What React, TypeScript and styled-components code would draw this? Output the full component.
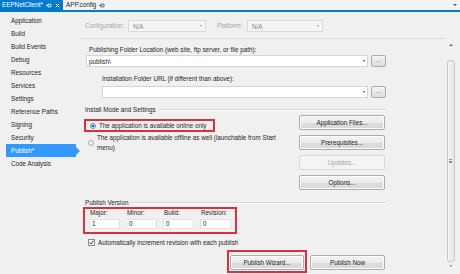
import React from "react";
import styled, { createGlobalStyle } from "styled-components";

const GlobalStyle = createGlobalStyle`
  html, body { margin: 0; padding: 0; background: #f0f0f0; }
  body { font-family: "Liberation Sans", Arial, sans-serif; }
  * { box-sizing: border-box; }
`;

const FONT = `"Liberation Sans", Arial, sans-serif`;
const RED = "#d8303e";
const BLUE = "#007acc";

const Window = styled.div`
  width: 460px;
  height: 274px;
  overflow: hidden;
  background: #f0f0f0;
  font-family: ${FONT};
  font-size: 6.3px;
  color: #1e1e1e;
  display: flex;
  flex-direction: column;
`;

const TabStrip = styled.div`
  height: 10px;
  display: flex;
  align-items: stretch;
  background: #f3f3f5;
`;

const DocTab = styled.div<{ $active?: boolean }>`
  display: flex;
  align-items: center;
  gap: 3px;
  padding: 0 3px 0 2px;
  width: ${(p) => (p.$active ? "63px" : "auto")};
  background: ${(p) => (p.$active ? BLUE : "transparent")};
  color: ${(p) => (p.$active ? "#ffffff" : "#1e1e1e")};
  margin-left: ${(p) => (p.$active ? "0" : "1px")};
`;

const TabLabel = styled.span`
  flex: 1;
  white-space: nowrap;
  line-height: 10px;
`;

const Glyph = styled.svg`
  display: block;
  flex: none;
`;

const TabSpacer = styled.div`
  flex: 1;
`;

const OverflowArrow = styled.div`
  width: 0;
  height: 0;
  align-self: center;
  margin-right: 3px;
  border-left: 2px solid transparent;
  border-right: 2px solid transparent;
  border-top: 2px solid #555;
`;

const AccentLine = styled.div`
  height: 2px;
  background: ${BLUE};
`;

const Body = styled.div`
  flex: 1;
  display: flex;
  min-height: 0;
`;

const Sidebar = styled.nav`
  width: 80px;
  flex: none;
  padding-top: 2px;
  display: flex;
  flex-direction: column;
`;

const NavItem = styled.div<{ $selected?: boolean }>`
  position: relative;
  height: 13px;
  line-height: 13px;
  padding-left: ${(p) => (p.$selected ? "5px" : "11px")};
  margin-left: ${(p) => (p.$selected ? "6px" : "0")};
  width: ${(p) => (p.$selected ? "70px" : "auto")};
  background: ${(p) => (p.$selected ? "#3399ff" : "transparent")};
  color: ${(p) => (p.$selected ? "#ffffff" : "#1e1e1e")};
  white-space: nowrap;
  &::after {
    content: "";
    display: ${(p) => (p.$selected ? "block" : "none")};
    position: absolute;
    right: -4px;
    top: 2.5px;
    border-top: 4px solid transparent;
    border-bottom: 4px solid transparent;
    border-left: 4px solid #3399ff;
  }
`;

const Main = styled.div`
  flex: 1;
  display: flex;
  flex-direction: column;
  min-width: 0;
`;

const ConfigBar = styled.div`
  height: 27px;
  padding: 8px 0 0 5px;
  display: flex;
  align-items: flex-start;
  border-bottom: 1px solid #dadada;
  margin-right: 14px;
`;

const FieldLabel = styled.span<{ $gap?: number }>`
  color: #a6a6a6;
  line-height: 12px;
  margin-left: ${(p) => p.$gap ?? 0}px;
  width: ${(p) => (p.$gap ? "30px" : "43px")};
  white-space: nowrap;
`;

const Select = styled.div<{ $width: number }>`
  width: ${(p) => p.$width}px;
  height: 12px;
  border: 1px solid #d9d9d9;
  background: #f5f5f5;
  color: #8a8a8a;
  display: flex;
  align-items: center;
  justify-content: space-between;
  padding: 0 3px 0 4px;
`;

const SmallArrow = styled.span<{ $color?: string }>`
  width: 0;
  height: 0;
  border-left: 1.5px solid transparent;
  border-right: 1.5px solid transparent;
  border-top: 2px solid ${(p) => p.$color ?? "#444"};
`;

const ScrollArea = styled.div`
  flex: 1;
  display: flex;
  justify-content: space-between;
  padding-right: 4px;
  min-height: 0;
`;

const Content = styled.div`
  width: 306px;
  padding-left: 5px;
  display: flex;
  flex-direction: column;
`;

const Scrollbar = styled.div`
  width: 11px;
  display: flex;
  flex-direction: column;
  align-items: center;
`;

const ScrollButton = styled.div<{ $height: number }>`
  height: ${(p) => p.$height}px;
  display: flex;
  align-items: center;
  justify-content: center;
`;

const UpArrow = styled.span`
  width: 0;
  height: 0;
  border-left: 2px solid transparent;
  border-right: 2px solid transparent;
  border-bottom: 2px solid #606060;
`;

const Thumb = styled.div`
  margin-top: 9px;
  width: 8px;
  height: 202px;
  border: 1px solid #c9c9c9;
  border-radius: 3px;
  background: linear-gradient(to right, #f4f4f4, #e4e4e4);
  display: flex;
  align-items: center;
  justify-content: center;
`;

const Grip = styled.div`
  width: 3px;
  height: 4px;
  border-top: 1px solid #8e8e8e;
  border-bottom: 1px solid #8e8e8e;
  position: relative;
  &::after {
    content: "";
    position: absolute;
    left: 0;
    right: 0;
    top: 0.5px;
    border-top: 1px solid #8e8e8e;
  }
`;

const Label = styled.div<{ $top: number; $indent?: number }>`
  margin-top: ${(p) => p.$top}px;
  padding-left: ${(p) => p.$indent ?? 4}px;
  line-height: 8px;
  height: 8px;
  white-space: nowrap;
`;

const ComboRow = styled.div<{ $top: number; $indent?: number }>`
  margin-top: ${(p) => p.$top}px;
  padding-left: ${(p) => p.$indent ?? 1}px;
  display: flex;
  gap: 3px;
  height: 12px;
`;

const Combo = styled.div`
  flex: 1;
  border: 1px solid #d5d5d5;
  background: #ffffff;
  display: flex;
  align-items: center;
  justify-content: space-between;
  padding: 0 2px 0 2px;
`;

const BrowseButton = styled.div`
  width: 15px;
  border: 1px solid #acacac;
  border-radius: 2px;
  background: linear-gradient(#f4f4f4, #dcdcdc);
  display: flex;
  align-items: center;
  justify-content: center;
  font-size: 5px;
  line-height: 5px;
  padding-bottom: 2px;
  color: #333;
`;

const GroupHeader = styled.div<{ $top: number }>`
  margin-top: ${(p) => p.$top}px;
  height: 9px;
  display: flex;
  align-items: center;
  gap: 3px;
  white-space: nowrap;
  &::after {
    content: "";
    flex: 1;
    height: 0;
    border-top: 1px solid #d5d5d5;
    border-bottom: 1px solid #ffffff;
  }
`;

const ModeSection = styled.div`
  margin-top: 1px;
  display: flex;
  justify-content: space-between;
`;

const RadioColumn = styled.div`
  display: flex;
  flex-direction: column;
  margin-left: -1px;
`;

const Highlight = styled.div<{ $top: number }>`
  margin-top: ${(p) => p.$top}px;
  border: 2px solid ${RED};
  align-self: flex-start;
`;

const OnlineBox = styled(Highlight)`
  width: 131px;
  height: 13px;
  padding-left: 2px;
  display: flex;
  align-items: center;
`;

const RadioRow = styled.div<{ $top?: number }>`
  margin-top: ${(p) => p.$top ?? 0}px;
  display: flex;
  align-items: center;
  gap: 3px;
  line-height: 10px;
`;

const Radio = styled.span<{ $checked?: boolean }>`
  flex: none;
  width: 6px;
  height: 6px;
  margin-left: 2px;
  border-radius: 50%;
  border: 1px solid ${(p) => (p.$checked ? "#6a8bb8" : "#a8a8a8")};
  background: ${(p) =>
    p.$checked
      ? "radial-gradient(circle, #1f5fa8 0 1.4px, #e9eef6 1.6px)"
      : "#f4f4f4"};
`;

const RadioText = styled.span<{ $wrap?: number }>`
  white-space: ${(p) => (p.$wrap ? "normal" : "nowrap")};
  width: ${(p) => (p.$wrap ? `${p.$wrap}px` : "auto")};
  line-height: 10px;
`;

const ButtonColumn = styled.div`
  width: 86px;
  margin-right: 1px;
  display: flex;
  flex-direction: column;
  gap: 5px;
`;

const Button = styled.div<{ $disabled?: boolean; $width?: number }>`
  height: 15px;
  width: ${(p) => (p.$width ? `${p.$width}px` : "auto")};
  border: 1px solid ${(p) => (p.$disabled ? "#d9d9d9" : "#acacac")};
  border-radius: 2px;
  background: ${(p) =>
    p.$disabled
      ? "#f4f4f4"
      : "linear-gradient(#f3f3f3 0%, #ebebeb 50%, #dddddd 51%, #d8d8d8 100%)"};
  color: ${(p) => (p.$disabled ? "#a6a6a6" : "#1e1e1e")};
  display: flex;
  align-items: center;
  justify-content: center;
  white-space: nowrap;
  box-shadow: inset 0 0 0 1px ${(p) => (p.$disabled ? "transparent" : "#fcfcfc")};
`;

const VersionBox = styled(Highlight)`
  margin-left: -2px;
  width: 154px;
  padding: 0 4px 3px 4px;
  display: flex;
  gap: 6px;
`;

const VersionField = styled.div`
  width: 31px;
  display: flex;
  flex-direction: column;
  gap: 2px;
`;

const VersionLabel = styled.span`
  line-height: 8px;
  padding-left: 1px;
`;

const VersionInput = styled.div`
  height: 10px;
  background: #ffffff;
  border: 1px solid #e2e2e2;
  line-height: 8px;
  padding-left: 2px;
`;

const CheckRow = styled.div`
  margin-top: 3px;
  height: 10px;
  display: flex;
  align-items: center;
  gap: 3px;
  padding-left: 3px;
`;

const CheckBox = styled.span`
  width: 7px;
  height: 7px;
  border: 1px solid #8f8f8f;
  background: #f4f4f4;
  display: flex;
  align-items: center;
  justify-content: center;
`;

const ActionRow = styled.div`
  margin-top: 3px;
  padding-right: 1px;
  display: flex;
  justify-content: flex-end;
  align-items: flex-start;
  gap: 3px;
`;

const WizardBox = styled(Highlight)`
  margin-top: 0;
  padding: 3px 1px 1px 1px;
`;

const NowButton = styled(Button)`
  margin-top: 5px;
`;

const PinIcon = ({ color }: { color: string }) => (
  <Glyph width="6" height="5" viewBox="0 0 6 5">
    <path d="M0 2.5h2M2 0.8v3.4M2 1.2h3v2.6h-3" stroke={color} strokeWidth="0.8" fill="none" />
  </Glyph>
);

const CloseIcon = ({ color }: { color: string }) => (
  <Glyph width="5" height="5" viewBox="0 0 5 5">
    <path d="M0.8 0.8l3.4 3.4M4.2 0.8l-3.4 3.4" stroke={color} strokeWidth="1" />
  </Glyph>
);

const navItems = [
  "Application",
  "Build",
  "Build Events",
  "Debug",
  "Resources",
  "Services",
  "Settings",
  "Reference Paths",
  "Signing",
  "Security",
  "Publish*",
  "Code Analysis",
];

const versionFields = [
  { label: "Major:", value: "1" },
  { label: "Minor:", value: "0" },
  { label: "Build:", value: "0" },
  { label: "Revision:", value: "0" },
];

export default function App() {
  return (
    <>
      <GlobalStyle />
      <Window>
        <TabStrip>
          <DocTab $active>
            <TabLabel>EEPNetClient*</TabLabel>
            <PinIcon color="#ffffff" />
            <CloseIcon color="#ffffff" />
          </DocTab>
          <DocTab>
            <TabLabel>APP.config</TabLabel>
            <PinIcon color="#444444" />
          </DocTab>
          <TabSpacer />
          <OverflowArrow />
        </TabStrip>
        <AccentLine />
        <Body>
          <Sidebar>
            {navItems.map((item) => (
              <NavItem key={item} $selected={item === "Publish*"}>
                {item}
              </NavItem>
            ))}
          </Sidebar>
          <Main>
            <ConfigBar>
              <FieldLabel>Configuration:</FieldLabel>
              <Select $width={78}>
                N/A
                <SmallArrow $color="#9a9a9a" />
              </Select>
              <FieldLabel $gap={11}>Platform:</FieldLabel>
              <Select $width={76}>
                N/A
                <SmallArrow $color="#9a9a9a" />
              </Select>
            </ConfigBar>
            <ScrollArea>
              <Content>
                <Label $top={7}>Publishing Folder Location (web site, ftp server, or file path):</Label>
                <ComboRow $top={1}>
                  <Combo>
                    publish\
                    <SmallArrow />
                  </Combo>
                  <BrowseButton>...</BrowseButton>
                </ComboRow>
                <Label $top={8} $indent={17}>
                  Installation Folder URL (if different than above):
                </Label>
                <ComboRow $top={3} $indent={17}>
                  <Combo>
                    <span />
                    <SmallArrow />
                  </Combo>
                  <BrowseButton>...</BrowseButton>
                </ComboRow>
                <GroupHeader $top={7}>Install Mode and Settings</GroupHeader>
                <ModeSection>
                  <RadioColumn>
                    <OnlineBox $top={4}>
                      <RadioRow>
                        <Radio $checked />
                        <RadioText>The application is available online only</RadioText>
                      </RadioRow>
                    </OnlineBox>
                    <RadioRow $top={1}>
                      <Radio style={{ marginLeft: 4 }} />
                      <RadioText $wrap={190}>
                        The application is available offline as well (launchable from Start menu)
                      </RadioText>
                    </RadioRow>
                  </RadioColumn>
                  <ButtonColumn>
                    <Button>Application Files...</Button>
                    <Button>Prerequisites...</Button>
                    <Button $disabled>Updates...</Button>
                    <Button>Options...</Button>
                  </ButtonColumn>
                </ModeSection>
                <GroupHeader $top={8}>Publish Version</GroupHeader>
                <VersionBox $top={0}>
                  {versionFields.map((f) => (
                    <VersionField key={f.label}>
                      <VersionLabel>{f.label}</VersionLabel>
                      <VersionInput>{f.value}</VersionInput>
                    </VersionField>
                  ))}
                </VersionBox>
                <CheckRow>
                  <CheckBox>
                    <svg width="5" height="5" viewBox="0 0 5 5">
                      <path d="M0.5 2.5l1.4 1.5 2.6-3.4" stroke="#3a3a3a" strokeWidth="0.9" fill="none" />
                    </svg>
                  </CheckBox>
                  Automatically increment revision with each publish
                </CheckRow>
                <ActionRow>
                  <WizardBox $top={0}>
                    <Button $width={74}>Publish Wizard...</Button>
                  </WizardBox>
                  <NowButton $width={75}>Publish Now</NowButton>
                </ActionRow>
              </Content>
              <Scrollbar>
                <ScrollButton $height={12}>
                  <UpArrow />
                </ScrollButton>
                <Thumb>
                  <Grip />
                </Thumb>
                <ScrollButton $height={8}>
                  <SmallArrow $color="#606060" />
                </ScrollButton>
              </Scrollbar>
            </ScrollArea>
          </Main>
        </Body>
      </Window>
    </>
  );
}
